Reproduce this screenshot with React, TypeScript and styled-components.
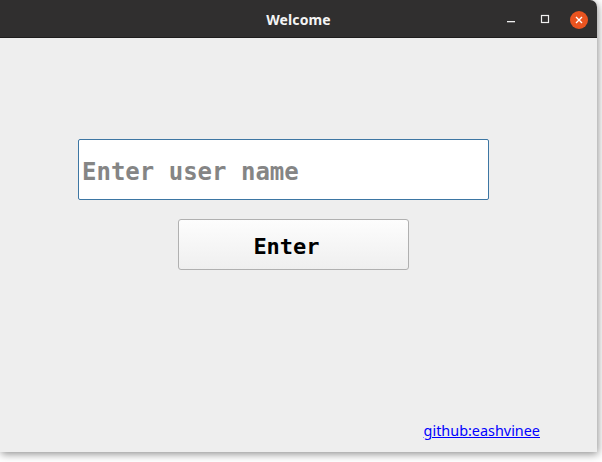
import React from "react";
import styled, { createGlobalStyle } from "styled-components";

const Global = createGlobalStyle`
  html, body { margin: 0; padding: 0; }
  body {
    width: 602px;
    height: 462px;
    background: #ffffff;
    overflow: hidden;
    font-family: "DejaVu Sans", sans-serif;
  }
`;

const Window = styled.div`
  width: 597px;
  height: 452px;
  display: flex;
  flex-direction: column;
  background: #eeeeee;
  border-top-right-radius: 7px;
  overflow: hidden;
  box-shadow: 1px 2px 8px rgba(0, 0, 0, 0.45);
`;

const TitleBar = styled.div`
  position: relative;
  height: 37px;
  flex: 0 0 37px;
  background: #302f2f;
  border-bottom: 1px solid #1e1d1d;
  display: flex;
  align-items: center;
  justify-content: center;
`;

const Title = styled.span`
  color: #f4f4f4;
  font-family: "Noto Sans", "DejaVu Sans", sans-serif;
  font-weight: 700;
  font-size: 14px;
  letter-spacing: 0.1px;
  margin-left: 0;
  margin-top: 1px;
`;

const Controls = styled.div`
  position: absolute;
  right: 9px;
  top: 0;
  height: 37px;
  display: flex;
  align-items: center;
`;

const CtrlBtn = styled.div<{ $w: number; $end?: boolean }>`
  width: ${(p) => p.$w}px;
  height: 37px;
  display: flex;
  align-items: center;
  justify-content: ${(p) => (p.$end ? "flex-end" : "center")};
`;

const Close = styled.div`
  width: 18px;
  height: 18px;
  border-radius: 50%;
  background: #e95420;
  display: flex;
  align-items: center;
  justify-content: center;
  margin-top: 3px;
`;

const Content = styled.div`
  flex: 1;
  display: flex;
  flex-direction: column;
  padding: 101px 0 12px 78px;
`;

const NameInput = styled.input`
  box-sizing: border-box;
  width: 411px;
  height: 61px;
  border: 1px solid #3d76a3;
  border-radius: 2px;
  background: #ffffff;
  padding: 4px 0 0 3px;
  font-family: "DejaVu Sans Mono", monospace;
  font-size: 24px;
  color: #333;
  outline: none;
  &::placeholder {
    color: #858585;
    font-weight: 600;
  }
`;

const EnterButton = styled.button`
  box-sizing: border-box;
  margin: 19px 0 0 100px;
  width: 231px;
  height: 51px;
  border: 1px solid #b0b0b0;
  border-radius: 3px;
  background: linear-gradient(#fdfdfd, #efefef);
  font-family: "DejaVu Sans Mono", monospace;
  font-weight: 700;
  font-size: 22px;
  color: #000;
  padding: 4px 14px 0 0;
`;

const Spacer = styled.div`
  flex: 1;
`;

const Link = styled.a`
  align-self: flex-end;
  margin-right: 57px;
  font-family: "Noto Sans", "DejaVu Sans", sans-serif;
  font-size: 14.4px;
  color: #0000ff;
  text-decoration: underline;
`;

export default function App() {
  return (
    <>
      <Global />
      <Window>
        <TitleBar>
          <Title>Welcome</Title>
          <Controls>
            <CtrlBtn $w={34}>
              <svg width="10" height="10" viewBox="0 0 10 10">
                <rect x="1" y="7" width="8" height="1.3" fill="#f0f0f0" />
              </svg>
            </CtrlBtn>
            <CtrlBtn $w={34}>
              <svg width="10" height="10" viewBox="0 0 10 10">
                <rect x="1.5" y="1.5" width="7" height="7" fill="none" stroke="#f0f0f0" strokeWidth="1.2" />
              </svg>
            </CtrlBtn>
            <CtrlBtn $w={26} $end>
              <Close>
                <svg width="10" height="10" viewBox="0 0 10 10">
                  <path d="M2 2 L8 8 M8 2 L2 8" stroke="#ffffff" strokeWidth="1.4" />
                </svg>
              </Close>
            </CtrlBtn>
          </Controls>
        </TitleBar>
        <Content>
          <NameInput placeholder="Enter user name" />
          <EnterButton>Enter</EnterButton>
          <Spacer />
          <Link href="#">github:eashvinee</Link>
        </Content>
      </Window>
    </>
  );
}
